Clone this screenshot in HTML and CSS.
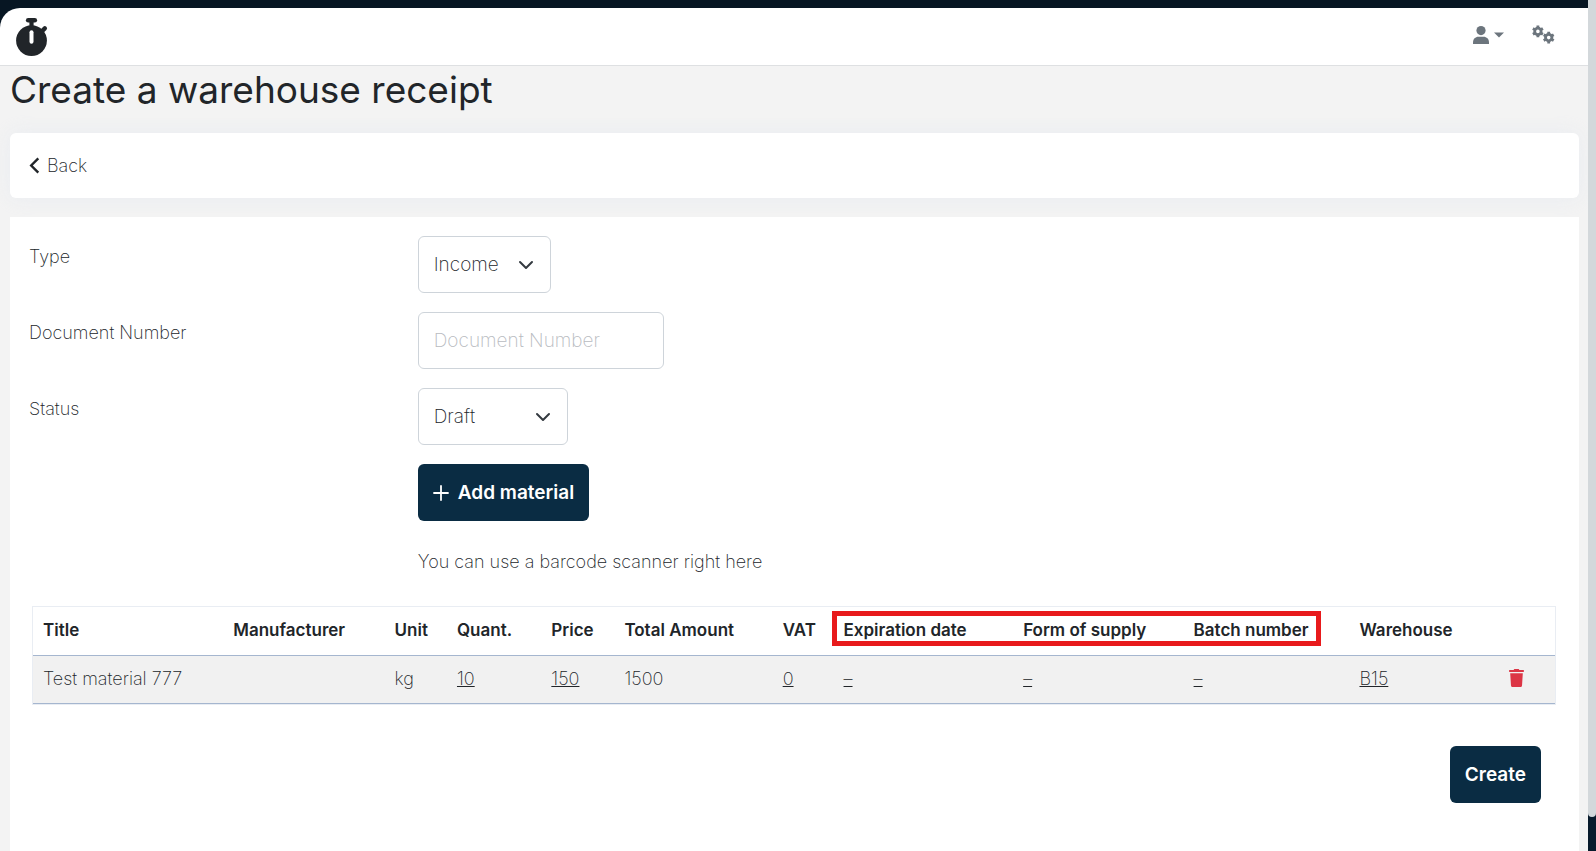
FILE: index.html
```html
<!DOCTYPE html>
<html lang="en">
<head>
  <meta charset="UTF-8">
  <meta name="viewport" content="width=device-width, initial-scale=1.0">
  <title>Create a warehouse receipt</title>
  <link rel="stylesheet" href="styles.css">
</head>
<body>
  <div class="page">
    <header class="topbar">
      <a href="#" class="logo" aria-label="Home">
        <svg width="32" height="38" viewBox="0 0 32 38">
          <g fill="#212529">
            <circle cx="15.5" cy="22.6" r="15.4"/>
            <rect x="9.9" y="0" width="11.2" height="4.6" rx="2.3"/>
            <rect x="13.4" y="2" width="4.2" height="8"/>
          </g>
          <path d="M25.7 13.5l3.1-3.1" stroke="#212529" stroke-width="4.4" stroke-linecap="round"/>
          <path d="M15.5 14.2v9.6" stroke="#fff" stroke-width="4" stroke-linecap="round"/>
        </svg>
      </a>
      <nav class="topbar-nav">
        <button type="button" class="icon-btn" aria-label="Account">
          <svg width="16" height="18" viewBox="0 0 16 18">
            <circle cx="8" cy="4.6" r="4.6"/>
            <path d="M0 18v-1.6C0 13 2.4 10.8 5.4 10.8h5.2c3 0 5.4 2.2 5.4 5.6V18z"/>
          </svg>
          <svg width="10" height="6" viewBox="0 0 10 6"><path d="M0 .5h10L5 5.5z"/></svg>
        </button>
        <button type="button" class="icon-btn" aria-label="Settings">
          <svg width="23" height="19" viewBox="0 0 23 19">
            <defs>
              <g id="gear" fill="none" stroke="#6c757d">
                <circle r="3.2" stroke-width="2.8"/>
                <path d="M0-5.8v11.6M-5-2.9l10 5.8M-5 2.9l10-5.8" stroke-width="2.8" stroke-dasharray="2.2 7.2 2.2"/>
              </g>
            </defs>
            <use href="#gear" x="5.9" y="6.4"/>
            <use href="#gear" x="16.7" y="12.6"/>
          </svg>
        </button>
      </nav>
    </header>

    <main>
      <h1>Create a warehouse receipt</h1>

      <div class="card back-card">
        <a href="#" class="back">
          <svg width="11" height="18" viewBox="0 0 11 18"><path d="M9.3 1.4L2.2 8.5l7.1 7.1" fill="none" stroke="#212529" stroke-width="2.4"/></svg>
          Back
        </a>
      </div>

      <form class="panel">
        <div class="row">
          <label for="type">Type</label>
          <select id="type" class="control type">
            <option>Income</option>
            <option>Outcome</option>
          </select>
        </div>
        <div class="row">
          <label for="number">Document Number</label>
          <input type="text" id="number" class="control number" placeholder="Document Number">
        </div>
        <div class="row">
          <label for="status">Status</label>
          <select id="status" class="control status">
            <option>Draft</option>
            <option>Completed</option>
          </select>
        </div>
        <div class="row">
          <button type="button" class="btn add">
            <svg width="16" height="16" viewBox="0 0 16 16"><path d="M8 1v14M1 8h14" stroke="#fff" stroke-width="1.8" stroke-linecap="round"/></svg>
            Add material
          </button>
        </div>
        <div class="row">
          <p class="hint">You can use a barcode scanner right here</p>
        </div>

        <div class="table-wrap">
          <table>
            <colgroup>
              <col class="c-title"><col class="c-manufacturer"><col class="c-unit"><col class="c-quant">
              <col class="c-price"><col class="c-total"><col class="c-vat"><col class="c-expiration">
              <col class="c-form"><col class="c-batch"><col class="c-warehouse"><col>
            </colgroup>
            <thead>
              <tr>
                <th>Title</th>
                <th>Manufacturer</th>
                <th>Unit</th>
                <th>Quant.</th>
                <th>Price</th>
                <th>Total Amount</th>
                <th>VAT</th>
                <th>Expiration date</th>
                <th>Form of supply</th>
                <th>Batch number</th>
                <th>Warehouse</th>
                <th></th>
              </tr>
            </thead>
            <tbody>
              <tr>
                <td>Test material 777</td>
                <td></td>
                <td>kg</td>
                <td><a href="#">10</a></td>
                <td><a href="#">150</a></td>
                <td>1500</td>
                <td><a href="#">0</a></td>
                <td><a href="#">–</a></td>
                <td><a href="#">–</a></td>
                <td><a href="#">–</a></td>
                <td><a href="#">B15</a></td>
                <td>
                  <button type="button" class="icon-btn" aria-label="Delete">
                    <svg width="15" height="18" viewBox="0 0 15 18" fill="#dc3545">
                      <path d="M.6 1.1h4L5.3 0h4.4l.7 1.1h4c.8 0 .8 2 0 2H.6c-.8 0-.8-2 0-2z"/>
                      <path d="M1.2 4.2h12.6L13 16.4c-.1 1-.8 1.6-1.7 1.6H3.7c-.9 0-1.6-.6-1.7-1.6z"/>
                    </svg>
                  </button>
                </td>
              </tr>
            </tbody>
          </table>
          <div class="highlight"></div>
        </div>

        <div class="actions">
          <button type="submit" class="btn">Create</button>
        </div>
      </form>
    </main>
  </div>
  <div class="scroll-rail"><div class="scroll-thumb"></div></div>
</body>
</html>
```

FILE: styles.css
```css
* { box-sizing: border-box; }
html, body { margin: 0; height: 100%; }
body {
  display: flex;
  overflow: hidden;
  background: #071623;
  color: #212529;
  font-family: Inter, 'Open Sans', sans-serif;
  font-size: 18px;
  font-weight: 200;
  line-height: 27px;
}
a { color: inherit; }
button, input, select { font: inherit; color: inherit; }
svg { display: block; }

.page { flex: 1; min-width: 0; display: flex; flex-direction: column; padding-top: 8px; }

.topbar {
  display: flex; align-items: center; justify-content: space-between;
  height: 58px; padding: 0 33px 0 16px;
  background: #fff;
  border-bottom: 1px solid #dee0e2;
  border-top-left-radius: 20px;
}
.topbar-nav { display: flex; align-items: center; gap: 28px; padding-bottom: 4px; }
.icon-btn { display: flex; align-items: center; gap: 5px; padding: 0; border: 0; background: none; fill: #6c757d; cursor: pointer; }

main { flex: 1; display: flex; flex-direction: column; padding: 0 9px 0 10px; background: #f3f3f3; }
h1 { margin: 0 0 19px; font-size: 37px; font-weight: 400; line-height: 48px; }

.card { background: #fff; border-radius: 6px; box-shadow: 0 0 20px rgba(220, 228, 240, 0.4); }
.back-card { display: flex; padding: 19px; margin-bottom: 19px; }
.back { display: flex; align-items: center; gap: 7px; text-decoration: none; }

.panel { flex: 1; display: flex; flex-direction: column; gap: 19px; padding: 19px; background: #fff; }
.row { display: grid; grid-template-columns: 1fr 3fr; column-gap: 8px; align-items: start; justify-items: start; }
.row label { padding-top: 7px; }
.row > :only-child { grid-column: 2; }

.control {
  height: 57px; padding: 0 15px;
  border: 1px solid #ced4da; border-radius: 6px;
  background: #fff; font-size: 19px;
}
.control::placeholder { color: #b8bbbf; opacity: 1; }
select.control {
  appearance: none;
  background: #fff url("data:image/svg+xml,%3Csvg xmlns='http://www.w3.org/2000/svg' viewBox='0 0 16 16'%3E%3Cpath fill='none' stroke='%23343a40' stroke-linecap='round' stroke-linejoin='round' stroke-width='2' d='m2 5 6 6 6-6'/%3E%3C/svg%3E") no-repeat right 16px center / 16px 16px;
}
.type { width: 133px; }
.number { width: 246px; }
.status { width: 150px; }

.btn {
  display: flex; align-items: center; gap: 9px;
  height: 57px; padding: 0 15px;
  border: 0; border-radius: 6px;
  background: #0a2c43; color: #fff;
  font-size: 19px; font-weight: 600; cursor: pointer;
}
.hint { margin: 8px 0 0; }

.table-wrap { position: relative; margin: 12px 4px 0 3px; border: 1px solid #e9edf3; }
table { width: 100%; table-layout: fixed; border-collapse: collapse; }
th, td { height: 48px; padding: 0 0 0 10px; text-align: left; white-space: nowrap; border-bottom: 1px solid #a5b6cf; }
td { padding-bottom: 2px; }
th { font-size: 17px; font-weight: 600; }
tbody td { background: #f1f1f1; }
.c-title { width: 12.5%; }
.c-manufacturer { width: 10.6%; }
.c-unit { width: 4.1%; }
.c-quant { width: 6.2%; }
.c-price { width: 4.8%; }
.c-total { width: 10.4%; }
.c-vat { width: 4%; }
.c-expiration { width: 11.8%; }
.c-form { width: 11.2%; }
.c-batch { width: 10.9%; }
.c-warehouse { width: 9.8%; }

.highlight {
  position: absolute; top: 4px; left: 52.5%;
  width: 32.1%; height: 35px;
  border: 5px solid #e81a1c;
  pointer-events: none;
}

.actions { display: flex; justify-content: flex-end; padding: 22px 19px 0 0; }

.scroll-rail { width: 8px; background: #071a2b; }
.scroll-thumb { height: 96%; background: #d3d8db; border-radius: 0 0 4px 4px; }
```
